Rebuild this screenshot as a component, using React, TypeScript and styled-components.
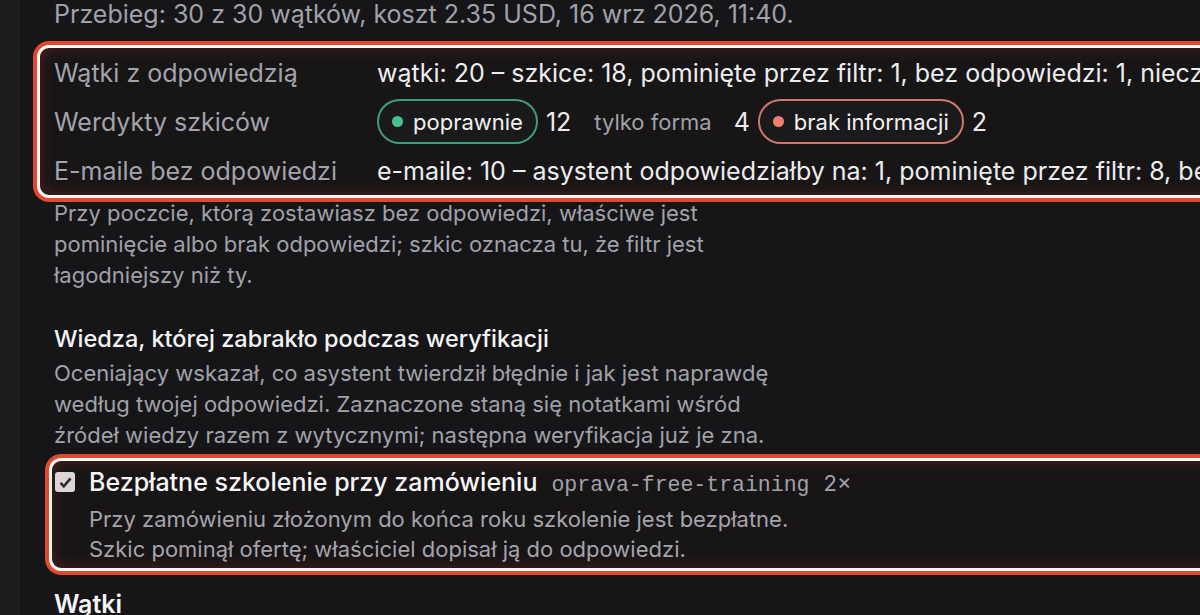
import styled, { createGlobalStyle } from "styled-components";

const Global = createGlobalStyle`
  html, body {
    margin: 0;
    padding: 0;
    background: #161618;
  }
  #root {
    width: 1200px;
    height: 615px;
    overflow: hidden;
  }
`;

const S = {
  Page: styled.div`
    display: flex;
    height: 615px;
    font-family: Inter, "Noto Sans", sans-serif;
    color: #a1a1a9;
  `,
  Rail: styled.div`
    flex: 0 0 20px;
    background: #1d1d20;
  `,
  Main: styled.main`
    flex: 0 0 1400px;
    padding-left: 34px;
  `,
  Meta: styled.div`
    font-size: 25px;
    line-height: 28px;
    color: #a1a1a9;
  `,
  Highlight: styled.div`
    border: 3px solid #fbf7f5;
    border-radius: 12px;
    box-shadow: 0 0 0 4px #e0492d, inset 0 0 16px rgba(200, 60, 40, 0.3);
    background: #181517;
  `,
  Stats: styled.div`
    margin: 17px 0 0 -17px;
    padding: 0 14px;
  `,
  StatRow: styled.div`
    display: grid;
    grid-template-columns: 323px 1fr;
    align-items: center;
    height: 49px;
    white-space: nowrap;
  `,
  StatLabel: styled.div`
    font-size: 25px;
    color: #a3a3ab;
  `,
  StatValue: styled.div`
    font-size: 25px;
    color: #ededee;
  `,
  Verdicts: styled.div`
    display: flex;
    align-items: center;
    gap: 8px;
  `,
  Pill: styled.span<{ $tone?: "green" | "red" }>`
    display: inline-flex;
    align-items: center;
    gap: 10px;
    box-sizing: border-box;
    height: 45px;
    padding: 0 ${(p) => (p.$tone ? "13px 0 13px" : "12px 0 13px")};
    border-radius: 23px;
    border: 2px solid
      ${(p) =>
        p.$tone === "green" ? "#3f9c7b" : p.$tone === "red" ? "#d0776a" : "transparent"};
    font-size: 22px;
    color: ${(p) => (p.$tone ? "#f2f2f2" : "#a1a1a9")};
    background: ${(p) => (p.$tone ? "#1a1a1c" : "transparent")};
  `,
  Dot: styled.span<{ $tone: "green" | "red" }>`
    width: 11px;
    height: 11px;
    border-radius: 50%;
    background: ${(p) => (p.$tone === "green" ? "#4bc08f" : "#f27d70")};
  `,
  Count: styled.span`
    font-size: 25px;
    color: #ededee;
  `,
  Note: styled.p<{ $gap?: number }>`
    max-width: 725px;
    margin: ${(p) => p.$gap ?? 0}px 0 0 0;
    font-size: 22px;
    line-height: 31px;
    color: #a1a1a9;
  `,
  Heading: styled.h3`
    margin: 33px 0 0 0;
    font-size: 23.5px;
    line-height: 30px;
    font-weight: 500;
    color: #f4f4f5;
  `,
  Item: styled.label`
    display: grid;
    grid-template-columns: 20px 1fr;
    column-gap: 14px;
    margin: 7px 0 0 -5px;
    padding: 5px 3px 4px 3px;
  `,
  Check: styled.span`
    width: 20px;
    height: 20px;
    margin-top: 6px;
    border-radius: 3px;
    background: #dcd7d6;
    display: flex;
    align-items: center;
    justify-content: center;
  `,
  ItemTitle: styled.div`
    display: flex;
    align-items: baseline;
    gap: 14px;
    font-size: 25px;
    line-height: 32px;
    font-weight: 500;
    color: #f6f6f6;
    white-space: nowrap;
  `,
  Slug: styled.code`
    font-family: "Liberation Mono", monospace;
    font-size: 21.5px;
    font-weight: 400;
    color: #a1a1a9;
  `,
  Times: styled.span`
    font-size: 22px;
    font-weight: 400;
    color: #a1a1a9;
  `,
  ItemText: styled.div`
    grid-column: 2;
    margin-top: 3px;
    font-size: 22px;
    line-height: 30px;
    color: #a4a4ab;
  `,
  Section: styled.h3`
    margin: 18px 0 0 0;
    font-size: 25px;
    line-height: 30px;
    font-weight: 600;
    color: #f4f4f5;
  `,
};

const stats = [
  {
    label: "Wątki z odpowiedzią",
    value:
      "wątki: 20 – szkice: 18, pominięte przez filtr: 1, bez odpowiedzi: 1, nieczytelne: 0",
  },
  { label: "Werdykty szkiców", value: null },
  {
    label: "E-maile bez odpowiedzi",
    value:
      "e-maile: 10 – asystent odpowiedziałby na: 1, pominięte przez filtr: 8, bez odpowiedzi: 1",
  },
];

const CheckMark = () => (
  <svg width="15" height="15" viewBox="0 0 14 14">
    <path d="M2.3 7.4 L5.4 10.5 L11.7 3.2" fill="none" stroke="#2e2c2c" strokeWidth="2.4" />
  </svg>
);

export default function App() {
  return (
    <>
      <Global />
      <S.Page>
        <S.Rail />
        <S.Main>
          <S.Meta>Przebieg: 30 z 30 wątków, koszt 2.35 USD, 16 wrz 2026, 11:40.</S.Meta>

          <S.Highlight as={S.Stats}>
            {stats.map((s) => (
              <S.StatRow key={s.label}>
                <S.StatLabel>{s.label}</S.StatLabel>
                {s.value ? (
                  <S.StatValue>{s.value}</S.StatValue>
                ) : (
                  <S.Verdicts>
                    <S.Pill $tone="green">
                      <S.Dot $tone="green" />
                      poprawnie
                    </S.Pill>
                    <S.Count>12</S.Count>
                    <S.Pill>tylko forma</S.Pill>
                    <S.Count>4</S.Count>
                    <S.Pill $tone="red">
                      <S.Dot $tone="red" />
                      brak informacji
                    </S.Pill>
                    <S.Count>2</S.Count>
                  </S.Verdicts>
                )}
              </S.StatRow>
            ))}
          </S.Highlight>

          <S.Note>
            Przy poczcie, którą zostawiasz bez odpowiedzi, właściwe jest pominięcie albo brak
            odpowiedzi; szkic oznacza tu, że filtr jest łagodniejszy niż ty.
          </S.Note>

          <S.Heading>Wiedza, której zabrakło podczas weryfikacji</S.Heading>
          <S.Note $gap={4}>
            Oceniający wskazał, co asystent twierdził błędnie i jak jest naprawdę według twojej
            odpowiedzi. Zaznaczone staną się notatkami wśród źródeł wiedzy razem z wytycznymi;
            następna weryfikacja już je zna.
          </S.Note>

          <S.Highlight as={S.Item}>
            <S.Check>
              <CheckMark />
            </S.Check>
            <S.ItemTitle>
              Bezpłatne szkolenie przy zamówieniu
              <S.Slug>oprava-free-training</S.Slug>
              <S.Times>2×</S.Times>
            </S.ItemTitle>
            <S.ItemText>
              Przy zamówieniu złożonym do końca roku szkolenie jest bezpłatne.
              <br />
              Szkic pominął ofertę; właściciel dopisał ją do odpowiedzi.
            </S.ItemText>
          </S.Highlight>

          <S.Section>Wątki</S.Section>
        </S.Main>
      </S.Page>
    </>
  );
}
